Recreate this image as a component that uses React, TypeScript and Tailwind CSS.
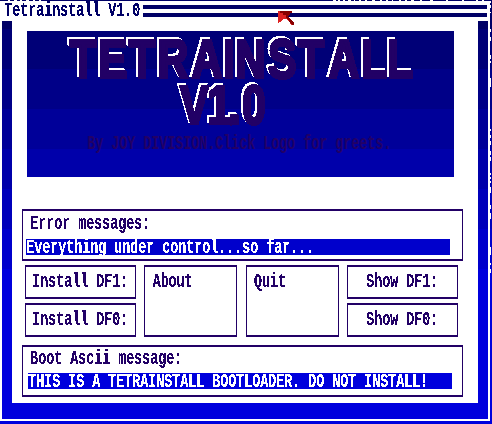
import React from "react";

function Label({ children, className = "" }: { children: string; className?: string }) {
  return (
    <div className={`h-4 whitespace-pre font-bold text-[13.333px] leading-4 [filter:url(#crisp)] ${className}`}>
      <span className="inline-block h-4 origin-[0_12px] translate-x-[0.3px] translate-y-[5px] scale-y-[1.57] align-top">{children}</span>
    </div>
  );
}

const frame = "border-x border-y-2 border-[#220066]";

function Button({ label, className }: { label: string; className: string }) {
  return (
    <button className={`${frame} flex items-start pt-[5px] text-left ${className}`}>
      <Label>{label}</Label>
    </button>
  );
}

const squeeze = 0.78;
const logoRows = [
  { text: "TETRAINSTALL", xs: [70, 98.5, 129, 157.5, 191.5, 223, 235, 268, 298, 328.5, 361, 387], y: 78 },
  { text: "V1.0", xs: [180, 207.5, 228.5, 242], y: 124 },
];

function Logo() {
  return (
    <svg
      width="427"
      height="100"
      viewBox="27 31 427 100"
      className="block overflow-visible"
      fontFamily="Liberation Sans, Arial, sans-serif"
      fontWeight="700"
      fontSize="55"
      fill="#220066"
      stroke="#220066"
      strokeWidth="3"
      filter="url(#logoEdge)"
    >
      {logoRows.map((row) => (
        <text key={row.text} transform={`scale(${squeeze} 1)`} x={row.xs.map((x) => x / squeeze).join(" ")} y={row.y}>
          {row.text}
        </text>
      ))}
    </svg>
  );
}

const topGaps: [number, number][] = [
  [8, 2], [14, 3], [20, 2], [26, 3], [33, 2], [39, 2], [333, 3], [338, 2], [343, 2], [348, 3], [354, 1], [359, 2],
  [365, 2], [372, 3], [380, 2], [386, 2], [392, 1], [399, 2], [405, 2], [411, 3], [420, 2], [430, 3], [446, 2], [462, 2], [476, 2], [482, 2],
];
const sideGaps: [number, number][] = [
  [1, 2], [5, 3], [12, 1], [29, 3], [37, 4], [55, 4], [61, 2], [78, 9], [129, 2], [135, 3], [141, 4], [151, 4], [157, 4],
  [173, 2], [177, 2], [181, 2], [187, 6], [205, 4], [213, 6], [247, 8], [263, 2], [269, 4],
];

function Defs() {
  return (
    <svg width="0" height="0" className="absolute">
      <filter id="crisp" x="-5%" y="-30%" width="110%" height="170%" colorInterpolationFilters="sRGB">
        <feComponentTransfer><feFuncA type="discrete" tableValues="0 0 1 1 1" /></feComponentTransfer>
      </filter>
      <filter id="logoEdge" x="-5%" y="-5%" width="110%" height="110%" colorInterpolationFilters="sRGB">
        <feComponentTransfer result="face"><feFuncA type="discrete" tableValues="0 1" /></feComponentTransfer>
        <feOffset in="face" dx="-2" dy="-2" result="edge" />
        <feFlood floodColor="#ffffff" />
        <feComposite in2="edge" operator="in" result="light" />
        <feMerge><feMergeNode in="light" /><feMergeNode in="face" /></feMerge>
      </filter>
    </svg>
  );
}

export default function App() {
  return (
    <div className="relative h-[424px] w-[492px] overflow-hidden bg-[linear-gradient(#000066_29px,#000077_29px,#000077_69px,#000088_69px,#000088_109px,#000099_109px,#000099_149px,#0000aa_149px,#0000aa_189px,#0000bb_189px,#0000bb_229px,#0000cc_229px,#0000cc_269px,#0000dd_269px)] pt-px font-['Liberation_Mono',monospace] text-[#220066]">
      <Defs />
      <div className="h-[420px] w-[490px] bg-white">
        <header className="flex h-5 items-start pl-1 pr-[3px]">
          <Label className="w-[139px] text-[#000066]">Tetrainstall V1.0</Label>
          <div className="mt-1 h-3 flex-1 border-y-4 border-[#000066]" />
        </header>
        <div className="px-[2px]">
          <div className="h-[398px] bg-[linear-gradient(#000066_8px,#000077_8px,#000077_48px,#000088_48px,#000088_88px,#000099_88px,#000099_128px,#0000aa_128px,#0000aa_168px,#0000bb_168px,#0000bb_208px,#0000cc_208px,#0000cc_248px,#0000dd_248px)] px-[10px]">
            <main className="h-[382px] bg-white pt-[10px]">
              <div className="ml-[15px] h-[146px] w-[427px] bg-[linear-gradient(#000077_38px,#000088_38px,#000088_78px,#000099_78px,#000099_118px,#0000aa_118px)]">
                <Logo />
                <Label className="ml-[60px] mt-[3px] [filter:none]!">By JOY DIVISION.Click Logo for greets.</Label>
              </div>
              <section className={`ml-[10px] mt-8 h-[52px] w-[441px] pt-[3px] ${frame}`}>
                <Label className="ml-[7px]">Error messages:</Label>
                <div className="ml-[3px] mt-[9px] flex h-4 w-[424px] bg-[#0000cc] text-white">
                  <Label className="-mt-px">Everything under control...so far...</Label>
                </div>
              </section>
              <div className="ml-[13px] mt-1 grid h-[72px] w-[433px] grid-cols-[111px_93px_93px_111px] grid-rows-[34px_34px] justify-between gap-y-1">
                <Button label="Install DF1:" className="pl-[6px]" />
                <Button label="About" className="row-span-2 pl-[7px]" />
                <Button label="Quit" className="row-span-2 pl-[7px]" />
                <Button label="Show DF1:" className="pl-[18px]" />
                <Button label="Install DF0:" className="pl-[6px]" />
                <Button label="Show DF0:" className="pl-[18px]" />
              </div>
              <section className={`ml-[10px] mt-2 h-[52px] w-[441px] pt-[3px] ${frame}`}>
                <Label className="-mt-px ml-[7px]">Boot Ascii message:</Label>
                <div className="ml-[5px] mt-2 flex h-4 w-[424px] bg-[#0000dd] text-white">
                  <Label className="-mt-px">THIS IS A TETRAINSTALL BOOTLOADER. DO NOT INSTALL!</Label>
                </div>
              </section>
            </main>
          </div>
        </div>
      </div>
      <svg className="absolute left-0 top-0" width="492" height="424" fill="#ffffff" shapeRendering="crispEdges">
        {topGaps.map(([x, w]) => <rect key={x} x={x} y="0" width={w} height="1" />)}
        {sideGaps.map(([y, h]) => <rect key={y} x="490" y={y} width="1" height={h} />)}
      </svg>
      <svg className="absolute left-[278px] top-[11px]" width="16" height="14" shapeRendering="crispEdges">
        <path fill="#dd2222" d="M0 0H2L10 4L8 7L10 8L13 10V12L16 12V14H13L12 12L10 10L8 8L6 8L4 9L2 11L0 12Z" />
        <path fill="#880000" d="M2 0H14V2H12V3L10 5V6L14 10L16 12V14H14L8 6V4H5V2H2Z" />
      </svg>
    </div>
  );
}
